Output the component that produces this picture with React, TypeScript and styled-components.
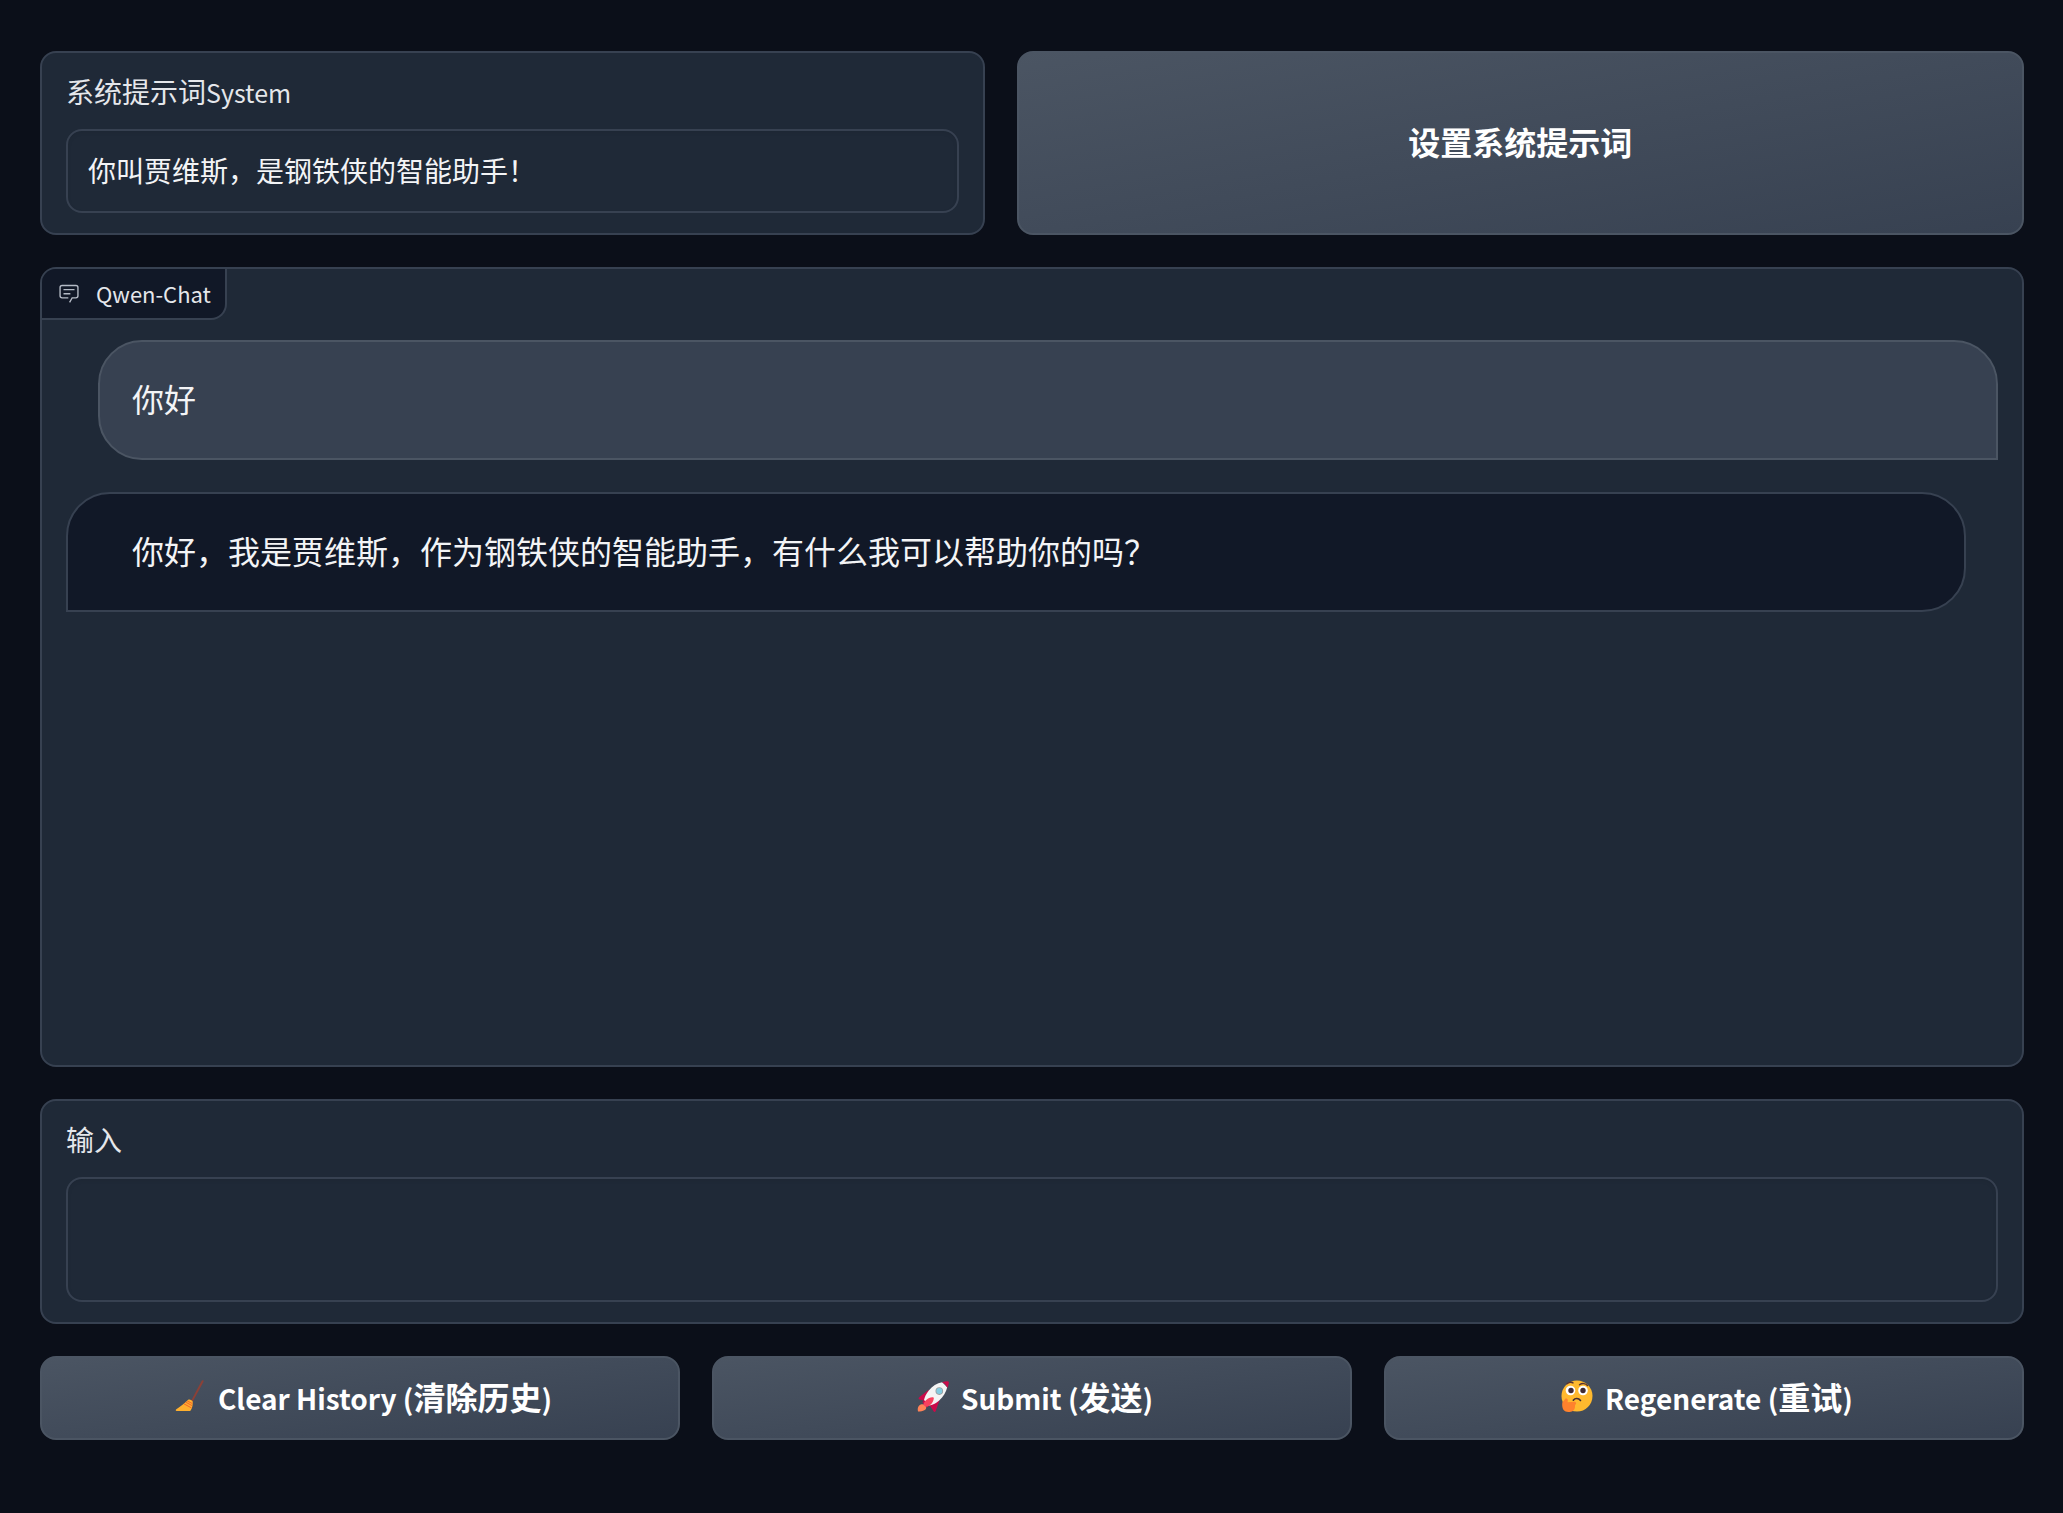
import React, { useState } from "react";
import styled, { createGlobalStyle } from "styled-components";

const GlobalStyle = createGlobalStyle`
  *, *::before, *::after { box-sizing: border-box; }
  body {
    margin: 0;
    background: #0b0f19;
    color: #f3f4f6;
    font-family: "Noto Sans CJK SC", "Noto Sans", sans-serif;
  }
  button, input, textarea { font: inherit; color: inherit; margin: 0; }
`;

const Page = styled.main`
  display: flex;
  flex-direction: column;
  gap: 32px;
  padding: 51px 39px 72px 40px;
`;

const SystemRow = styled.section`
  display: grid;
  grid-template-columns: minmax(0, 15fr) minmax(0, 16fr);
  gap: 32px;
`;

const ActionRow = styled.section`
  display: grid;
  grid-template-columns: repeat(3, minmax(0, 1fr));
  gap: 32px;
`;

const Panel = styled.div`
  background: #1f2937;
  border: 2px solid #374151;
  border-radius: 16px;
`;

const FieldPanel = styled(Panel)`
  display: flex;
  flex-direction: column;
  gap: 18px;
  padding: 18px 24px 20px;
`;

const FieldLabel = styled.label`
  color: #e5e7eb;
  font-size: 28px;
  line-height: 40px;
`;

const Latin = styled.span<{ $size: number }>`
  font-size: ${(p) => p.$size}px;
  line-height: 1;
`;

const fieldBox = `
  display: block;
  width: 100%;
  padding: 18px 20px 20px;
  border: 2px solid #374151;
  border-radius: 16px;
  background: #1f2937;
  box-shadow: inset 0 2px 4px rgba(0, 0, 0, 0.06);
  outline: none;
  resize: none;
  color: #f3f4f6;
  font-size: 28px;
  line-height: 40px;
`;

const TextInput = styled.input`
  ${fieldBox}
  height: 84px;
`;

const TextArea = styled.textarea`
  ${fieldBox}
  height: 125px;
`;

const Button = styled.button`
  display: flex;
  align-items: center;
  justify-content: center;
  gap: 12px;
  min-height: 84px;
  padding: 14px 24px 18px;
  border: 2px solid #4b5563;
  border-radius: 16px;
  background: linear-gradient(to bottom right, #4b5563, #374151) border-box;
  color: #ffffff;
  font-size: 32px;
  font-weight: 700;
  line-height: 48px;
  white-space: nowrap;
  cursor: pointer;
`;

const ChatPanel = styled(Panel)`
  display: flex;
  flex-direction: column;
  align-items: flex-start;
  height: 800px;
  overflow: hidden;
`;

const ChatTab = styled.header`
  display: flex;
  align-items: center;
  gap: 16px;
  height: 51px;
  padding: 0 14px 2px 16px;
  background: #111827;
  border: solid #374151;
  border-width: 0 2px 2px 0;
  border-radius: 0 0 16px 0;
  color: #e5e7eb;
  font-size: 22px;
  line-height: 32px;
`;

const ChatIcon = styled.svg`
  width: 22px;
  height: 22px;
  color: #b4bac5;
`;

const Messages = styled.div`
  display: flex;
  flex-direction: column;
  gap: 32px;
  width: 100%;
  padding: 20px 24px;
`;

const Bubble = styled.div<{ $from: "user" | "bot" }>`
  padding: 32px 32px 36px;
  border: 2px solid ${(p) => (p.$from === "user" ? "#4b5563" : "#374151")};
  background: ${(p) => (p.$from === "user" ? "#374151" : "#111827")};
  border-radius: ${(p) => (p.$from === "user" ? "44px 44px 0 44px" : "44px 44px 44px 0")};
  margin-left: ${(p) => (p.$from === "user" ? 32 : 0)}px;
  margin-right: ${(p) => (p.$from === "user" ? 0 : 32)}px;
  padding-left: ${(p) => (p.$from === "user" ? 32 : 64)}px;
  font-size: 32px;
  line-height: 48px;
`;

const Emoji = styled.svg`
  flex: none;
  width: 32px;
  height: 32px;
  margin-left: 6px;
`;

const Broom = () => (
  <Emoji viewBox="0 0 32 32" aria-hidden="true">
    <path d="M28.6 1.2 18.2 20.6" stroke="#8b4137" strokeWidth="2" strokeLinecap="round" fill="none" />
    <path d="M14.5 19.6c1.3-.6 3.6.5 4.2 2 .2 3.200-.5 7.600-2.500 9.400H2.600c-1-.1-1.200-1-.3-1.700 4.500-3 8-5.800 12.200-9.700Z" fill="#ffb02e" />
    <path d="m11.800 22.200 6.400 3.500M10 23.900l7.500 4M13.300 21l5.200 2.600" stroke="#f3642b" strokeWidth="1" fill="none" />
  </Emoji>
);

const Rocket = () => (
  <Emoji viewBox="0 0 32 32" aria-hidden="true">
    <path d="M2.200 25.500c2-2.200 6.400-1.600 7 1.200.4 3.300-2.700 4.700-8.200 4.800-.6-2.500-.3-4.500 1.200-6Z" fill="#ff8257" />
    <path d="M12 9.500 2.500 17c-1.500 1.200-1 2.300.4 2.600l6.500 1.800ZM22.500 20.200 18.700 31c-.5 1.300-1.700 1.200-2.300.1L11.300 23Z" fill="#ca0b4a" />
    <path d="M5.300 22.300 8 19.500l5 5-2.700 2.800Z" fill="#ca0b4a" />
    <path d="M25.200 2.200c-5.300.9-9.900 4-13.400 8.200-2.600 3.200-4.100 6.500-4.800 9.700l5.500 5.400c3.600-.8 6.900-2.500 9.700-5.100 4.200-3.800 7-8.300 8-13.200Z" fill="#f4f4f4" />
    <path d="M25 2.200c2-.7 4-1 5.700-.9.900.1 1.200.5 1.200 1.300-.2 1.800-.7 3.600-1.500 5.500-1.100-2.800-2.700-4.700-5.400-5.900Z" fill="#ca0b4a" />
    <circle cx="22.300" cy="11.100" r="3.800" fill="#9b9b9b" />
    <circle cx="22.300" cy="11.100" r="3" fill="#83cbe0" />
    <path d="M6.300 24.800c1.200-4.300 4.400-7.100 9.100-7.600 1.100-.1 1.600.5 1.400 1.500-.8 4.500-3.700 7.300-8.100 8.100Z" fill="#f8415e" />
  </Emoji>
);

const Thinking = () => (
  <Emoji viewBox="0 0 32 32" aria-hidden="true">
    <circle cx="16" cy="16" r="15.500" fill="#ffb92e" />
    <circle cx="9.500" cy="10.500" r="4.800" fill="#ffffff" />
    <circle cx="22" cy="10.500" r="4.800" fill="#ffffff" />
    <circle cx="10" cy="10.500" r="2.700" fill="#402a32" />
    <circle cx="22" cy="10.500" r="2.700" fill="#402a32" />
    <path d="M6 3.800c2-1.600 4.200-2.100 6-.9M18.500 4.800c2.700-2 6.300-1.500 8 .8" stroke="#5a3430" strokeWidth="1.400" strokeLinecap="round" fill="none" />
    <path d="M12.300 20.200c1.800-2.300 5.200-2.300 7.200.3" stroke="#402a32" strokeWidth="1.600" strokeLinecap="round" fill="none" />
    <path d="M1.200 23.500c.2-2.500 1.900-2.500 2.500-4 .4-1.600 3-1.500 3.100.4.100 1-.2 1.700-.3 2.300l6.700-.5c2.200 0 2.600 2.500.9 3.100l-.2 2.600c-.3 3-3 4.600-6.500 4.600-4.200 0-6.500-2.800-6.200-8.500Z" fill="#ff822d" />
  </Emoji>
);

export default function App() {
  const [system, setSystem] = useState("你叫贾维斯，是钢铁侠的智能助手！");
  const [draft, setDraft] = useState("");

  return (
    <>
      <GlobalStyle />
      <Page lang="zh-CN">
        <SystemRow>
          <FieldPanel>
            <FieldLabel htmlFor="system">
              系统提示词<Latin $size={25}>System</Latin>
            </FieldLabel>
            <TextInput id="system" value={system} onChange={(e) => setSystem(e.target.value)} />
          </FieldPanel>
          <Button type="button">设置系统提示词</Button>
        </SystemRow>

        <ChatPanel>
          <ChatTab>
            <ChatIcon viewBox="0 0 32 32" fill="currentColor" aria-hidden="true">
              <path d="M17.740 30 16 29l4-7h6a2 2 0 0 0 2-2V8a2 2 0 0 0-2-2H6a2 2 0 0 0-2 2v12a2 2 0 0 0 2 2h9v2H6a4 4 0 0 1-4-4V8a4 4 0 0 1 4-4h20a4 4 0 0 1 4 4v12a4 4 0 0 1-4 4h-4.840Z" />
              <path d="M8 10h16v2H8zM8 16h10v2H8z" />
            </ChatIcon>
            Qwen-Chat
          </ChatTab>
          <Messages>
            <Bubble $from="user">你好</Bubble>
            <Bubble $from="bot">你好，我是贾维斯，作为钢铁侠的智能助手，有什么我可以帮助你的吗？</Bubble>
          </Messages>
        </ChatPanel>

        <FieldPanel>
          <FieldLabel htmlFor="draft">输入</FieldLabel>
          <TextArea id="draft" value={draft} onChange={(e) => setDraft(e.target.value)} />
        </FieldPanel>

        <ActionRow>
          <Button type="button">
            <Broom />
            <span>
              <Latin $size={28}>Clear History (</Latin>清除历史<Latin $size={28}>)</Latin>
            </span>
          </Button>
          <Button type="button">
            <Rocket />
            <span>
              <Latin $size={28}>Submit (</Latin>发送<Latin $size={28}>)</Latin>
            </span>
          </Button>
          <Button type="button">
            <Thinking />
            <span>
              <Latin $size={28}>Regenerate (</Latin>重试<Latin $size={28}>)</Latin>
            </span>
          </Button>
        </ActionRow>
      </Page>
    </>
  );
}
